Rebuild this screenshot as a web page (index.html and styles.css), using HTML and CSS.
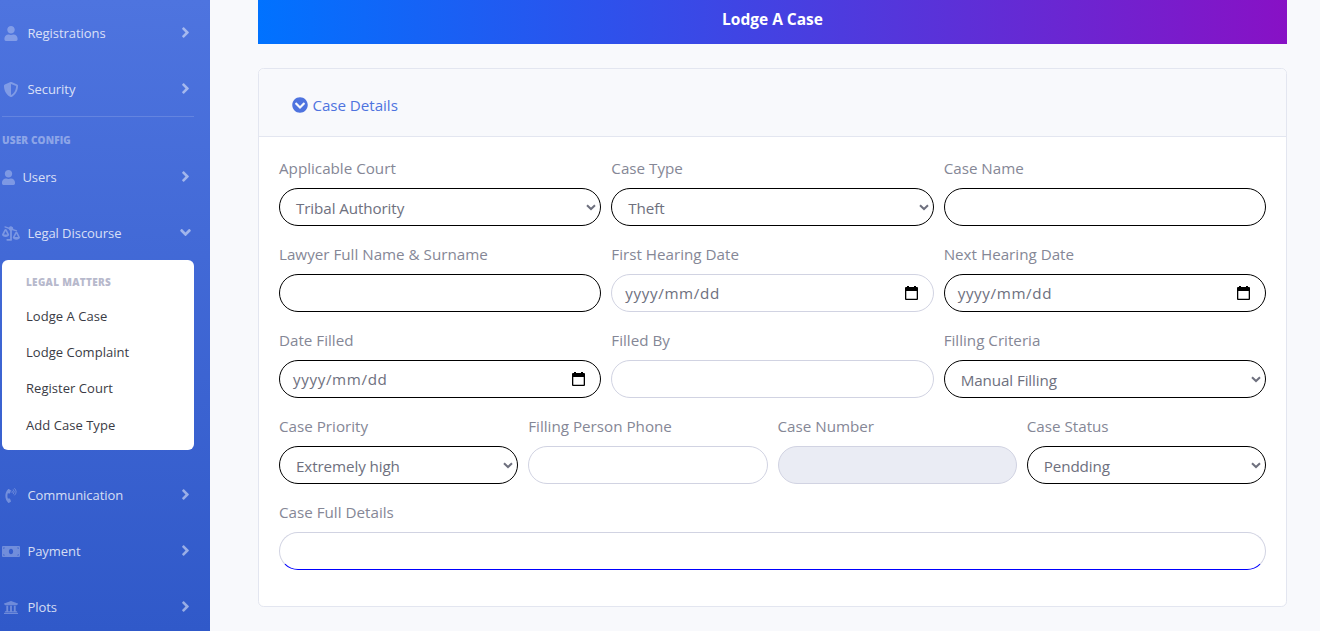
FILE: index.html
```html
<!DOCTYPE html>
<html lang="en">
<head>
<meta charset="utf-8">
<title>Lodge A Case</title>
<link rel="stylesheet" href="styles.css">
</head>
<body>
<svg class="defs" aria-hidden="true">
  <symbol id="user" viewBox="0 0 448 512"><path d="M224 256c70.7 0 128-57.3 128-128S294.7 0 224 0 96 57.3 96 128s57.3 128 128 128zm89.6 32h-16.7c-22.2 10.2-46.9 16-72.9 16s-50.6-5.8-72.9-16h-16.7C60.2 288 0 348.2 0 422.4V464c0 26.5 21.5 48 48 48h352c26.5 0 48-21.5 48-48v-41.6c0-74.2-60.2-134.4-134.4-134.4z"/></symbol>
  <symbol id="shield" viewBox="0 0 512 512"><path d="M466.5 83.7l-192-80a48.15 48.15 0 0 0-36.9 0l-192 80C27.7 91.1 16 108.6 16 128c0 198.5 114.5 335.7 221.5 380.3 11.8 4.9 25.1 4.9 36.9 0C360.1 472.6 496 349.3 496 128c0-19.4-11.7-36.9-29.5-44.3zM256.1 446.3l-.1-381 175.9 73.3c-3.3 151.4-82.1 261.1-175.8 307.7z"/></symbol>
  <symbol id="right" viewBox="0 0 256 512"><path d="M224.3 273l-136 136c-9.4 9.4-24.6 9.4-33.9 0l-22.6-22.6c-9.4-9.4-9.4-24.6 0-33.9l96.4-96.4-96.4-96.4c-9.4-9.4-9.4-24.6 0-33.9L54.3 103c9.4-9.4 24.6-9.4 33.9 0l136 136c9.5 9.4 9.5 24.6.1 34z"/></symbol>
  <symbol id="down" viewBox="0 0 320 512"><path d="M143 352.3L7 216.3c-9.4-9.4-9.4-24.6 0-33.9l22.6-22.6c9.4-9.4 24.6-9.4 33.9 0l96.4 96.4 96.4-96.4c9.4-9.4 24.6-9.4 33.9 0l22.6 22.6c9.4 9.4 9.4 24.6 0 33.9l-136 136c-9.2 9.4-24.4 9.4-33.8 0z"/></symbol>
  <symbol id="scale" viewBox="0 0 640 512"><path d="M96 40c-8-3-12-12-9-20l5-12c3-8 12-11 20-8l136 47a80 80 0 0 1 150 51l130 45c8 3 12 12 9 20l-5 13c-3 8-12 12-20 9l-142-49q-8 9-18 14v346c0 9-7 16-16 16H176c-9 0-16-7-16-16v-32c0-9 7-16 16-16h112V154c-24-10-43-32-47-60z"/><path fill-rule="evenodd" d="M256 304c0-15 1-8-85-181-17-34-66-34-86 0C-1 296 0 289 0 304c0 44 57 80 128 80s128-36 128-80zM128 168l60 120H68zM640 400c0-15 1-8-85-181-17-34-66-34-86 0-86 173-85 166-85 181 0 44 57 80 128 80s128-36 128-80zM512 264l60 120H452z"/></symbol>
  <symbol id="phone" viewBox="0 0 384 512"><path d="M97.333 506.966c-129.874-129.874-129.681-340.252 0-469.933 5.698-5.698 14.527-6.632 21.263-2.422l64.817 40.513a17.187 17.187 0 0 1 6.849 20.958l-32.408 81.021a17.188 17.188 0 0 1-17.669 10.719l-55.81-5.58c-21.051 58.261-20.612 122.471 0 179.515l55.811-5.581a17.188 17.188 0 0 1 17.669 10.719l32.408 81.022a17.188 17.188 0 0 1-6.849 20.958l-64.817 40.513a17.19 17.19 0 0 1-21.264-2.422z"/><path d="M230 100q26 28 0 58M275 58q60 70 0 142M318 18q105 110 0 222" fill="none" stroke="currentColor" stroke-width="30" stroke-linecap="round"/></symbol>
  <symbol id="money" viewBox="0 0 640 512"><path fill-rule="evenodd" d="M32 64h576c18 0 32 14 32 32v320c0 18-14 32-32 32H32c-18 0-32-14-32-32V96c0-18 14-32 32-32zM320 160c-44 0-76 43-76 96s32 96 76 96 76-43 76-96-32-96-76-96zM48 112v48c26 0 48-22 48-48zM544 112c0 26 22 48 48 48v-48zM48 352v48h48c0-26-22-48-48-48zM592 352c-26 0-48 22-48 48h48z"/></symbol>
  <symbol id="bank" viewBox="0 0 512 512"><path d="M496 128v16a8 8 0 0 1-8 8h-24v12c0 6.627-5.373 12-12 12H60c-6.627 0-12-5.373-12-12v-12H24a8 8 0 0 1-8-8v-16a8 8 0 0 1 4.941-7.392l232-88a7.996 7.996 0 0 1 6.118 0l232 88A8 8 0 0 1 496 128zm-24 304H40c-13.255 0-24 10.745-24 24v16a8 8 0 0 0 8 8h464a8 8 0 0 0 8-8v-16c0-13.255-10.745-24-24-24zM96 192v192H60c-6.627 0-12 5.373-12 12v20h416v-20c0-6.627-5.373-12-12-12h-36V192h-64v192h-64V192h-64v192h-64V192H96z"/></symbol>
  <symbol id="circle-down" viewBox="0 0 512 512"><path d="M504 256c0 137-111 248-248 248S8 393 8 256 119 8 256 8s248 111 248 248zM273 369.9l135.5-135.5c9.4-9.4 9.4-24.6 0-33.9l-17-17c-9.4-9.4-24.6-9.4-33.9 0L256 285.1 154.4 183.5c-9.4-9.4-24.6-9.4-33.9 0l-17 17c-9.4 9.4-9.4 24.6 0 33.9L239 369.9c9.4 9.4 24.6 9.4 34 0z"/></symbol>
  <symbol id="calendar" viewBox="0 0 13 14"><path fill-rule="evenodd" d="M1 1h1V0h2v1h5V0h2v1h1q1 0 1 1v11q0 1-1 1H1q-1 0-1-1V2q0-1 1-1zM1.3 5v7.7h10.4V5z"/></symbol>
  <symbol id="caret" viewBox="0 0 10 7"><path d="M1 1.2L5 5l4-3.8" fill="none" stroke="currentColor" stroke-width="2"/></symbol>
</svg>
<div class="page">
  <nav class="sidebar">
    <a class="item"><svg class="icon"><use href="#user"/></svg><span>Registrations</span><svg class="arrow"><use href="#right"/></svg></a>
    <a class="item"><svg class="icon"><use href="#shield"/></svg><span>Security</span><svg class="arrow"><use href="#right"/></svg></a>
    <hr class="divider">
    <div class="heading">USER CONFIG</div>
    <a class="item item-users"><svg class="icon"><use href="#user"/></svg><span>Users</span><svg class="arrow"><use href="#right"/></svg></a>
    <a class="item"><svg class="icon"><use href="#scale"/></svg><span>Legal Discourse</span><svg class="arrow"><use href="#down"/></svg></a>
    <div class="submenu">
      <div class="submenu-title">LEGAL MATTERS</div>
      <a class="submenu-link">Lodge A Case</a>
      <a class="submenu-link">Lodge Complaint</a>
      <a class="submenu-link">Register Court</a>
      <a class="submenu-link">Add Case Type</a>
    </div>
    <a class="item"><svg class="icon"><use href="#phone"/></svg><span>Communication</span><svg class="arrow"><use href="#right"/></svg></a>
    <a class="item"><svg class="icon"><use href="#money"/></svg><span>Payment</span><svg class="arrow"><use href="#right"/></svg></a>
    <a class="item"><svg class="icon"><use href="#bank"/></svg><span>Plots</span><svg class="arrow"><use href="#right"/></svg></a>
  </nav>
  <main class="content">
    <h1 class="banner">Lodge A Case</h1>
    <section class="card">
      <header class="card-header"><svg class="toggle"><use href="#circle-down"/></svg><span>Case Details</span></header>
      <form class="card-body">
        <div class="row">
          <div class="group"><div class="label">Applicable Court</div><div class="field dark select"><span>Tribal Authority</span><svg class="caret"><use href="#caret"/></svg></div></div>
          <div class="group"><div class="label">Case Type</div><div class="field dark select"><span>Theft</span><svg class="caret"><use href="#caret"/></svg></div></div>
          <div class="group"><div class="label">Case Name</div><div class="field dark"></div></div>
        </div>
        <div class="row">
          <div class="group"><div class="label">Lawyer Full Name &amp; Surname</div><div class="field dark"></div></div>
          <div class="group"><div class="label">First Hearing Date</div><div class="field date"><span>yyyy/mm/dd</span><svg class="calendar"><use href="#calendar"/></svg></div></div>
          <div class="group"><div class="label">Next Hearing Date</div><div class="field dark date"><span>yyyy/mm/dd</span><svg class="calendar"><use href="#calendar"/></svg></div></div>
        </div>
        <div class="row">
          <div class="group"><div class="label">Date Filled</div><div class="field dark date"><span>yyyy/mm/dd</span><svg class="calendar"><use href="#calendar"/></svg></div></div>
          <div class="group"><div class="label">Filled By</div><div class="field"></div></div>
          <div class="group"><div class="label">Filling Criteria</div><div class="field dark select"><span>Manual Filling</span><svg class="caret"><use href="#caret"/></svg></div></div>
        </div>
        <div class="row">
          <div class="group"><div class="label">Case Priority</div><div class="field dark select"><span>Extremely high</span><svg class="caret"><use href="#caret"/></svg></div></div>
          <div class="group"><div class="label">Filling Person Phone</div><div class="field"></div></div>
          <div class="group"><div class="label">Case Number</div><div class="field disabled"></div></div>
          <div class="group"><div class="label">Case Status</div><div class="field dark select"><span>Pendding</span><svg class="caret"><use href="#caret"/></svg></div></div>
        </div>
        <div class="row">
          <div class="group"><div class="label">Case Full Details</div><div class="field underlined"></div></div>
        </div>
      </form>
    </section>
  </main>
</div>
</body>
</html>
```
FILE: styles.css
```css
* { box-sizing: border-box; }
body {
  margin: 0;
  background: #f8f9fc;
  color: #858796;
  font: 15.2px/24px "Open Sans", "Noto Sans", sans-serif;
}
svg { fill: currentColor; flex: none; }
.defs { display: none; }
.page { display: flex; height: 631px; overflow: hidden; }

.sidebar {
  width: 210px;
  flex: none;
  padding: 5px 16px 0 2px;
  background: linear-gradient(180deg, #4e74df, #3059c9);
  color: rgba(255, 255, 255, .8);
}
.item {
  display: flex;
  align-items: center;
  height: 56px;
  font-size: 13px;
  letter-spacing: -.05px;
}
.icon { width: 18px; height: 15px; margin-right: 7.4px; color: rgba(255, 255, 255, .3); }
.arrow { width: 11px; height: 17px; margin: 0 3px 2px auto; color: rgba(255, 255, 255, .5); }
.item-users .icon { width: 13px; }
.divider { height: 1px; margin: -1px 0 15px; border: 0; background: rgba(255, 255, 255, .15); }
.heading, .submenu-title {
  font-size: 10px;
  line-height: 16px;
  font-weight: 800;
}
.heading { margin-bottom: 1px; color: rgba(255, 255, 255, .4); letter-spacing: .15px; }
.submenu {
  height: 190px;
  margin: -1px 0 17px;
  padding: 14px 24px 0;
  border-radius: 6px;
  background: #fff;
}
.submenu-title { margin-bottom: 8px; color: #b7b9cc; letter-spacing: .3px; }
.submenu-link { display: block; height: 36.2px; line-height: 36px; font-size: 13px; letter-spacing: .04px; color: #3a3b45; }

.content { flex: 1; padding: 0 33px 0 48px; }
.banner {
  height: 44px;
  margin: 0 0 24px;
  background: linear-gradient(to right, #0072ff, #8811c5);
  color: #fff;
  font-size: 15.5px;
  line-height: 38px;
  text-align: center;
}
.card {
  height: 539px;
  border: 1px solid #e3e6f0;
  border-radius: 5.6px;
  background: #fff;
}
.card-header {
  display: flex;
  align-items: center;
  gap: 4.4px;
  height: 68px;
  padding: 4px 33px 0;
  border-bottom: 1px solid #e3e6f0;
  border-radius: 5px 5px 0 0;
  background: #f8f9fc;
  color: #4e73df;
  letter-spacing: -.05px;
}
.toggle { width: 16px; height: 16px; }
.card-body { padding: 19px 20px; }
.row { display: flex; gap: 10px; height: 86px; }
.group { flex: 1; min-width: 0; }
.label { height: 32px; }
.field {
  display: flex;
  align-items: center;
  justify-content: space-between;
  height: 38px;
  border: 1px solid #d1d3e2;
  border-radius: 19px;
  background: #fff;
  color: #6e707e;
}
.dark { border-color: #000; }
.disabled { background: #eaecf4; }
.underlined { border-bottom-color: #00f; }
.select { padding: 2px 4px 0 16px; letter-spacing: -.1px; }
.caret { width: 10px; height: 7px; margin-bottom: 2px; }
.date { padding: 0 15px 0 13px; letter-spacing: .62px; }
.calendar { width: 13px; height: 14px; color: #000; }
```
